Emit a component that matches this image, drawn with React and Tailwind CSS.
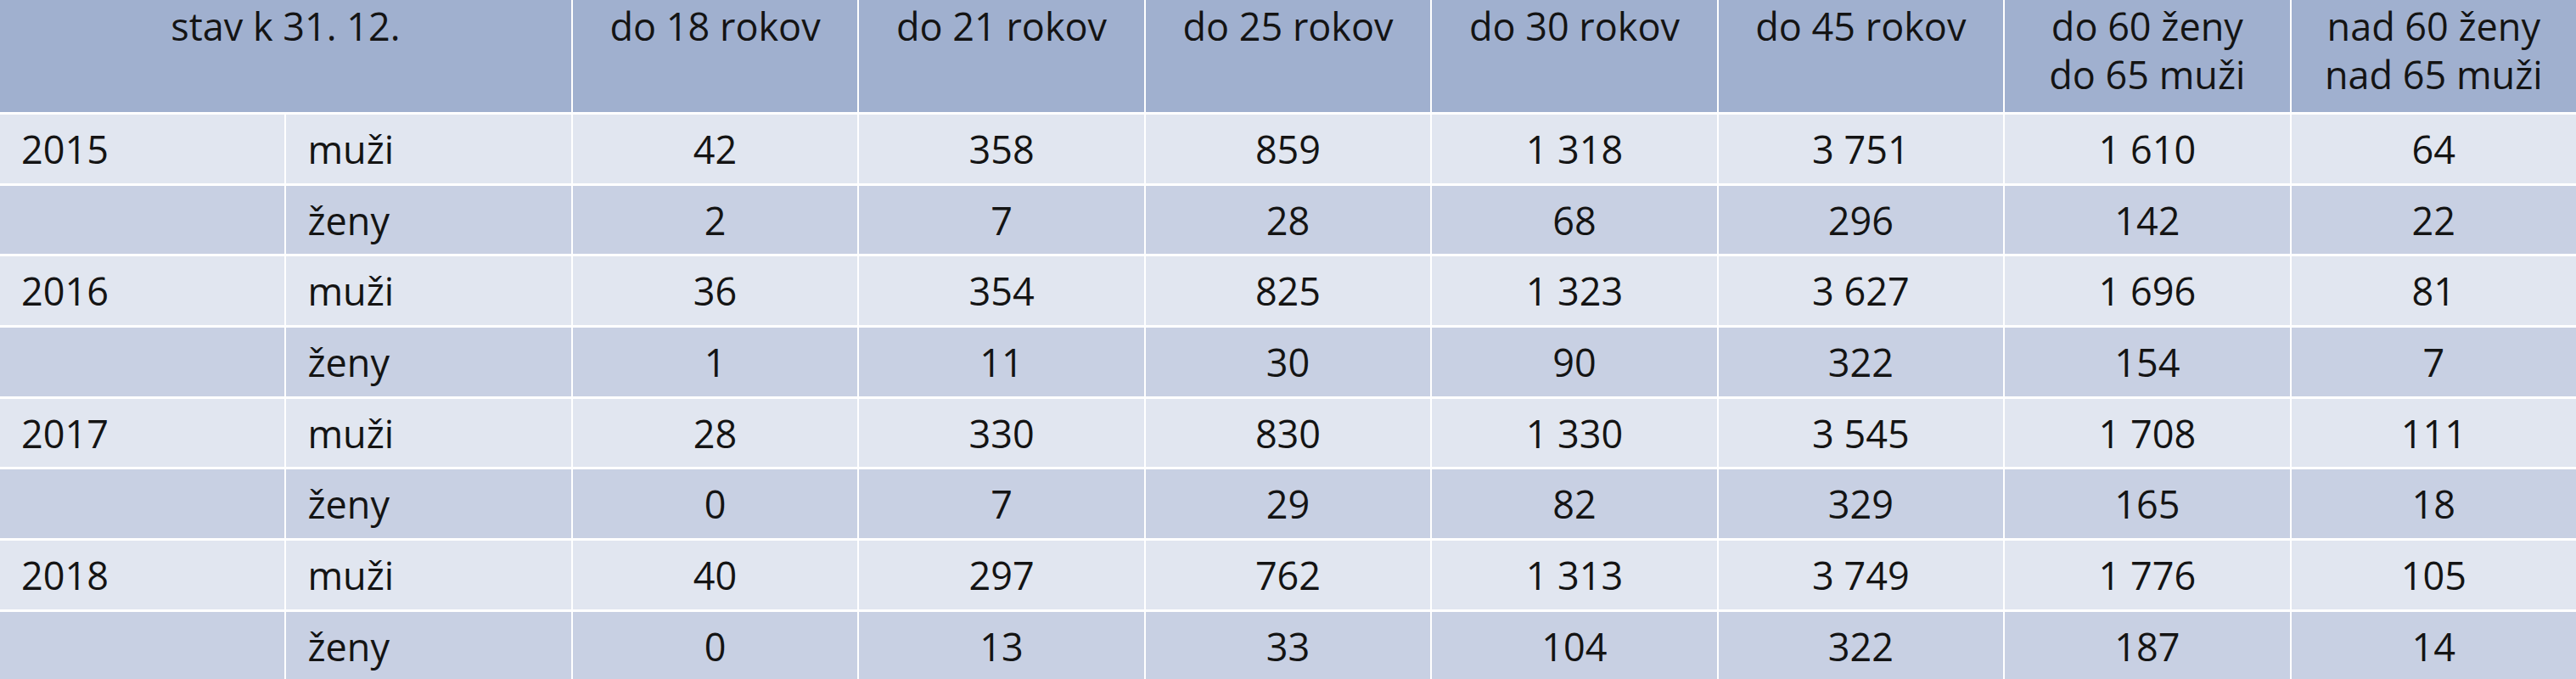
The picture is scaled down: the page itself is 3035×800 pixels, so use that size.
import React from 'react';

const HEADERS = [
  ['do 18 rokov'],
  ['do 21 rokov'],
  ['do 25 rokov'],
  ['do 30 rokov'],
  ['do 45 rokov'],
  ['do 60 ženy', 'do 65 muži'],
  ['nad 60 ženy', 'nad 65 muži'],
];

const ROWS = [
  {
    year: '2015',
    men: ['42', '358', '859', '1 318', '3 751', '1 610', '64'],
    women: ['2', '7', '28', '68', '296', '142', '22'],
  },
  {
    year: '2016',
    men: ['36', '354', '825', '1 323', '3 627', '1 696', '81'],
    women: ['1', '11', '30', '90', '322', '154', '7'],
  },
  {
    year: '2017',
    men: ['28', '330', '830', '1 330', '3 545', '1 708', '111'],
    women: ['0', '7', '29', '82', '329', '165', '18'],
  },
  {
    year: '2018',
    men: ['40', '297', '762', '1 313', '3 749', '1 776', '105'],
    women: ['0', '13', '33', '104', '322', '187', '14'],
  },
];

function BodyRow({ label, sex, values, dark }) {
  const bg = dark ? 'bg-[#c8d0e3]' : 'bg-[#e1e6f0]';
  return (
    <>
      <div className={`${bg} h-[80.7px] flex items-center pl-[25px]`}>{label}</div>
      <div className={`${bg} h-[80.7px] flex items-center pl-[25px]`}>{sex}</div>
      {values.map((v, i) => (
        <div key={i} className={`${bg} h-[80.7px] flex items-center justify-center`}>
          {v}
        </div>
      ))}
    </>
  );
}

export default function App() {
  return (
    <div
      className="w-[3035px] h-[800px] overflow-hidden bg-white text-[#141414] text-[45px] leading-[57px]"
      style={{ fontFamily: '"Open Sans", "Noto Sans", sans-serif' }}
    >
      <div className="grid grid-cols-9 gap-x-[2px] gap-y-[3px]">
        <div className="col-span-2 h-[132px] bg-[#a0b0cf] pt-[2px] text-center">stav k 31. 12.</div>
        {HEADERS.map((lines, i) => (
          <div key={i} className="h-[132px] bg-[#a0b0cf] pt-[2px] text-center">
            {lines.map((l) => (
              <div key={l}>{l}</div>
            ))}
          </div>
        ))}

        {ROWS.map((r) => (
          <React.Fragment key={r.year}>
            <BodyRow label={r.year} sex="muži" values={r.men} />
            <BodyRow label="" sex="ženy" values={r.women} dark />
          </React.Fragment>
        ))}
      </div>
    </div>
  );
}
